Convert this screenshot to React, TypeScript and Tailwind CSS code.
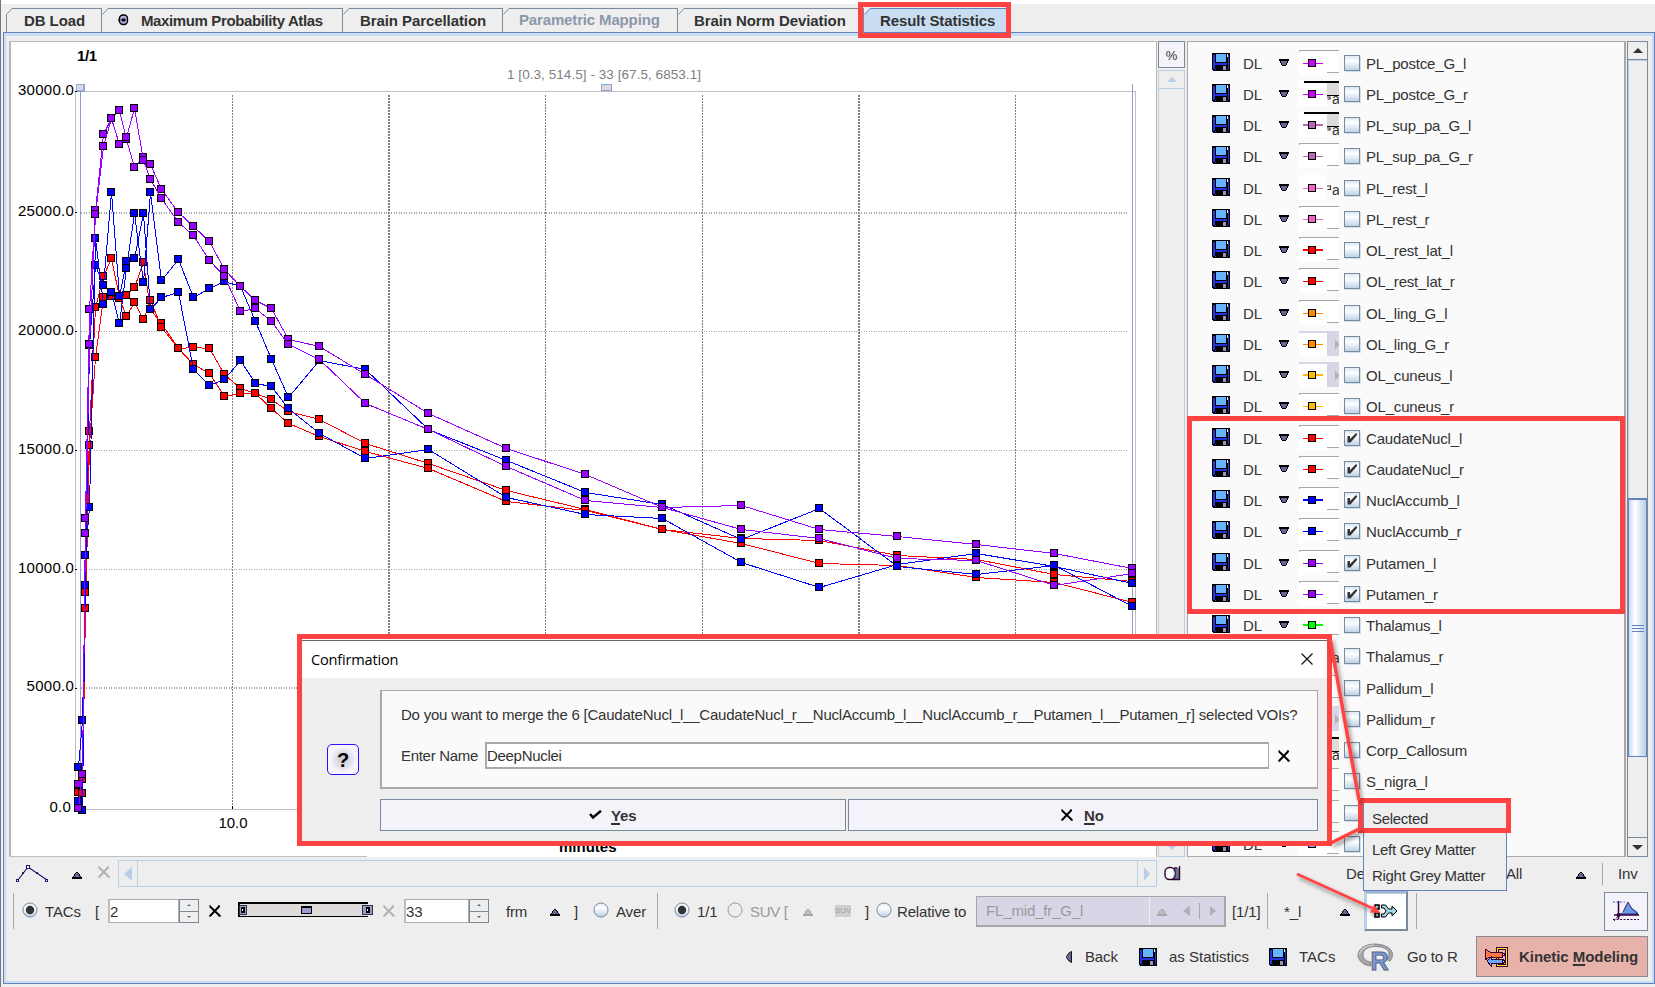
import React from 'react';

const FONT = "font-['Liberation_Sans',Arial,sans-serif]";

/* ---------- chart data (canvas units) ---------- */

const FRAME_X = [
  78, 82, 85, 89, 95, 103, 111, 119, 126, 134, 143, 150, 161, 178, 193, 209, 224, 240, 255, 271, 288, 319, 365, 428,
  506, 585, 662, 741, 819, 897, 976, 1054, 1132,
];

type Series = { color: string; y: number[] };

const SERIES: Series[] = [
  {
    color: '#ff0000',
    y: [
      792, 779, 592, 431, 307, 276, 258, 297, 295, 287, 262, 309, 323, 348, 347, 348, 374, 388, 393, 399, 411, 419, 443,
      463, 490, 509, 529, 538, 540, 555, 559, 574, 581,
    ],
  },
  {
    color: '#ff0000',
    y: [
      784, 793, 608, 445, 357, 297, 296, 298, 316, 302, 319, 300, 327, 348, 364, 373, 396, 393, 393, 408, 423, 436, 451,
      468, 501, 510, 529, 543, 563, 565, 577, 582, 602,
    ],
  },
  {
    color: '#0000ff',
    y: [
      767, 720, 585, 345, 265, 285, 192, 296, 261, 258, 213, 309, 297, 292, 369, 385, 379, 360, 383, 386, 408, 433, 458,
      449, 497, 514, 518, 562, 587, 564, 553, 566, 583,
    ],
  },
  {
    color: '#0000ff',
    y: [
      801, 810, 555, 507, 238, 304, 292, 323, 268, 213, 282, 192, 280, 259, 297, 288, 281, 286, 321, 359, 397, 360, 369,
      429, 460, 492, 504, 539, 508, 566, 574, 565, 606,
    ],
  },
  {
    color: '#9900ff',
    y: [
      784, 774, 518, 309, 210, 134, 118, 110, 139, 167, 157, 164, 189, 212, 226, 241, 269, 286, 300, 308, 339, 346, 374,
      413, 448, 474, 507, 505, 529, 536, 544, 553, 568,
    ],
  },
  {
    color: '#9900ff',
    y: [
      808, 774, 533, 344, 214, 146, 118, 144, 137, 108, 160, 179, 198, 222, 235, 260, 276, 311, 308, 321, 344, 359, 403,
      429, 466, 500, 507, 529, 538, 558, 560, 585, 573,
    ],
  },
];

function Chart() {
  const yTicks: [number, string, number][] = [
    [91, '30000.0', 95],
    [212, '25000.0', 216],
    [331, '20000.0', 335],
    [450, '15000.0', 454],
    [569, '10000.0', 573],
    [688, '5000.0', 691],
    [809, '0.0', 812],
  ];
  return (
    <svg width="1148" height="816" viewBox="9 41 1148 816" className="block shrink-0 bg-white">
      <g shapeRendering="crispEdges">
        <rect x="9" y="41" width="2" height="816" fill="#b8b8b8" />
        <rect x="9" y="41" width="1148" height="1" fill="#b8b8b8" />
        <rect x="1156" y="41" width="1" height="816" fill="#b8b8b8" />
        <rect x="9" y="857" width="1148" height="1" fill="#b8b8b8" />
        <rect x="9" y="856" width="358" height="1" fill="#c0c0c0" />
        {[232, 545, 702, 1015].map((x) => (
          <line key={x} x1={x + 0.5} x2={x + 0.5} y1="95" y2="809" stroke="#808080" strokeDasharray="2 1" />
        ))}
        {[388, 858].map((x) => (
          <line key={x} x1={x + 1} x2={x + 1} y1="95" y2="809" stroke="#808080" strokeWidth="2" strokeDasharray="2 1" />
        ))}
        {[331, 450, 569].map((y) => (
          <line key={y} x1="81" x2="1128" y1={y + 0.5} y2={y + 0.5} stroke="#a8a8a8" strokeDasharray="1 1.5" />
        ))}
        {[212, 687].map((y) => (
          <line key={y} x1="81" x2="1128" y1={y + 1} y2={y + 1} stroke="#a8a8a8" strokeWidth="2" strokeDasharray="1 1.5" />
        ))}
        <rect x="75.5" y="91.5" width="1060" height="718" fill="none" stroke="#c0c0c0" />
        {yTicks.slice(0, 6).map(([y]) => (
          <rect key={y} x="75" y={y} width="2" height="1" fill="#000" />
        ))}
        <rect x="232" y="806" width="1" height="3" fill="#000" />
        <rect x="80" y="91" width="1" height="718" fill="#9c9ad0" />
        <rect x="1132" y="84" width="1" height="725" fill="#9c9ad0" />
        <rect x="76.5" y="84.5" width="7" height="6" fill="#dedada" stroke="#8fb0e4" />
        <path d="M84.500 84v7h-8" fill="none" stroke="#9c9ad0" />
        <rect x="601.500" y="84.500" width="10" height="6" fill="#dedada" stroke="#7fa8e8" />
        <path d="M611.500 84v6.500h-10" fill="none" stroke="#9c9ad0" />
        {SERIES.map((s, i) => (
          <g key={i}>
            <polyline
              points={s.y.map((y, k) => `${FRAME_X[k] + 0.5},${y + 0.5}`).join(' ')}
              fill="none"
              stroke={s.color}
              strokeWidth="1"
            />
            {s.y.map((y, k) => (
              <rect key={k} x={FRAME_X[k] - 3.5} y={y - 3.5} width="7" height="7" fill={s.color} stroke="#000" />
            ))}
          </g>
        ))}
      </g>
      <g fontSize="15" fill="#000" fontFamily="Liberation Sans, Arial, sans-serif" letterSpacing="0">
        {yTicks.map(([y, label, base], i) => (
          <text key={y} x={i === 6 ? 71 : 74} y={base} textAnchor="end" letterSpacing="0.25">
            {label}
          </text>
        ))}
        <text x="233" y="828" textAnchor="middle">
          10.0
        </text>
        <text x="77" y="61" fontWeight="bold" textLength="20">
          1/1
        </text>
        <text x="507" y="79" fontSize="13.500" fill="#808080" textLength="194">
          1 [0.3, 514.5] - 33 [67.5, 6853.1]
        </text>
        <text x="559" y="852" fontWeight="bold">
          minutes
        </text>
      </g>
    </svg>
  );
}

/* ---------- icons ---------- */

function Floppy() {
  return (
    <svg width="18" height="18" viewBox="0 0 18 18" shapeRendering="crispEdges" className="block shrink-0">
      <path d="M0 0h18v18H1v-1H0z" fill="#000" />
      <path d="M1 2h2v14h1v-4h11v4h1V2h1v14h-1v1H3v-1H1z" fill="#2233dd" />
      <rect x="3" y="10" width="12" height="2" fill="#2233dd" />
      <rect x="4" y="12" width="11" height="6" fill="#000" />
      <rect x="4" y="1" width="10" height="8" fill="#66b3ff" />
      <rect x="11" y="13" width="3" height="4" fill="#9a96a8" />
      <rect x="15" y="1" width="1" height="3" fill="#fff" />
    </svg>
  );
}

function DownMark() {
  return (
    <svg width="10" height="7" viewBox="0 0 10 7" shapeRendering="crispEdges" className="block">
      <path d="M0 0h10v2H9v2H8v2H7v1H3V6H2V4H1V2H0z" fill="#000" />
      <path d="M2 2h6v2H7v2H3V4H2z" fill="#666699" />
    </svg>
  );
}

function UpMark({ dim = false }: { dim?: boolean }) {
  return (
    <svg width="10" height="7" viewBox="0 0 10 7" shapeRendering="crispEdges" className="block">
      <path d="M4 0h2v1h1v1h1v2h1v1h1v2H0V5h1V4h1V2h1V1h1z" fill={dim ? '#a6a6a6' : '#000'} />
      <path d="M4 1h2v1h1v2h1v1H2V4h1V2h1z" fill={dim ? '#bdbdbd' : '#666699'} />
    </svg>
  );
}

function Cross({ dim = false }: { dim?: boolean }) {
  return (
    <svg width="12" height="12" viewBox="0 0 12 12" className="block">
      <path d="M1 1.500L11 11M10.500 1L1 11" stroke={dim ? '#b0b0b0' : '#000'} strokeWidth="1.900" fill="none" />
      <path d="M0 1h2M9 1h2M9.500 11H12M0 11h2" stroke={dim ? '#b0b0b0' : '#000'} strokeWidth="1" />
    </svg>
  );
}

function Radio({ on = false, off = false }: { on?: boolean; off?: boolean }) {
  return (
    <svg width="16" height="16" viewBox="0 0 16 16" className="block">
      <defs>
        <linearGradient id="radioFill" x1="0" y1="0" x2="0" y2="1">
          <stop offset="0" stopColor="#dfe9f4" />
          <stop offset=".35" stopColor="#fff" />
          <stop offset="1" stopColor="#b8cfe5" />
        </linearGradient>
      </defs>
      <circle cx="8" cy="8" r="7" fill={off ? '#eee' : 'url(#radioFill)'} stroke={off ? '#999' : '#7a8a99'} />
      {on && <circle cx="8" cy="8" r="4.200" fill="#333" />}
    </svg>
  );
}

function Sep() {
  return <div className="h-9 w-px shrink-0 bg-[#a8a8a8]" />;
}

/* ---------- tabs ---------- */

function Tab({ children, width, kind = 'normal', first = false }: {
  children: React.ReactNode;
  width: string;
  kind?: 'normal' | 'disabled' | 'active';
  first?: boolean;
}) {
  const line = kind === 'active' ? '#6382bf' : '#7a8a99';
  return (
    <div className={`flex h-6 shrink-0 ${width} ${kind === 'active' ? 'bg-[#c8ddf2]' : ''}`}>
      <svg width="6" height="24" viewBox="0 0 6 24" className="block shrink-0">
        {kind === 'active' && <path d="M0 0h6L0 7z" fill="#eee" />}
        <path d={first ? 'M.5 24V6.500L6 .5' : 'M.5 6.500L6 .5'} stroke={line} fill="none" />
      </svg>
      <div
        className={`flex h-6 flex-1 items-center whitespace-nowrap border-r border-t pl-[10px] text-[15px] font-bold leading-none tracking-[-0.080px] ${
          kind === 'active'
            ? 'border-[#6382bf] pb-px text-[#333]'
            : kind === 'disabled'
              ? 'border-[#7a8a99] pb-[3px] text-[#8b98ab]'
              : 'border-[#7a8a99] pb-px text-[#333]'
        }`}
      >
        {children}
      </div>
    </div>
  );
}

/* ---------- VOI list ---------- */

type Strip = 'plain' | 'dark' | 'text' | 'lav';
type Voi = { name: string; color: string; strip: Strip; thick?: boolean; checked?: boolean };

const VOIS: Voi[] = [
  { name: 'PL_postce_G_l', color: '#cc00ff', strip: 'plain' },
  { name: 'PL_postce_G_r', color: '#cc00ff', strip: 'dark' },
  { name: 'PL_sup_pa_G_l', color: '#b868b8', strip: 'dark', thick: true },
  { name: 'PL_sup_pa_G_r', color: '#b868b8', strip: 'plain' },
  { name: 'PL_rest_l', color: '#ee66bb', strip: 'text' },
  { name: 'PL_rest_r', color: '#ee66bb', strip: 'plain' },
  { name: 'OL_rest_lat_l', color: '#ff0000', strip: 'plain', thick: true },
  { name: 'OL_rest_lat_r', color: '#ff0000', strip: 'plain' },
  { name: 'OL_ling_G_l', color: '#ff8800', strip: 'plain' },
  { name: 'OL_ling_G_r', color: '#ff8800', strip: 'lav' },
  { name: 'OL_cuneus_l', color: '#ffbb00', strip: 'lav', thick: true },
  { name: 'OL_cuneus_r', color: '#ffbb00', strip: 'plain' },
  { name: 'CaudateNucl_l', color: '#ff0000', strip: 'plain', checked: true },
  { name: 'CaudateNucl_r', color: '#ff0000', strip: 'plain', checked: true },
  { name: 'NuclAccumb_l', color: '#0000ff', strip: 'plain', thick: true, checked: true },
  { name: 'NuclAccumb_r', color: '#0000ff', strip: 'plain', checked: true },
  { name: 'Putamen_l', color: '#9900ff', strip: 'plain', checked: true },
  { name: 'Putamen_r', color: '#9900ff', strip: 'plain', checked: true },
  { name: 'Thalamus_l', color: '#00ff00', strip: 'plain', thick: true },
  { name: 'Thalamus_r', color: '#00ff00', strip: 'text' },
  { name: 'Pallidum_l', color: '#00ccff', strip: 'plain' },
  { name: 'Pallidum_r', color: '#00ccff', strip: 'lav' },
  { name: 'Corp_Callosum', color: '#ff8800', strip: 'dark' },
  { name: 'S_nigra_l', color: '#88aaff', strip: 'plain' },
  { name: '', color: '#88aaff', strip: 'plain' },
  { name: '', color: '#88aaff', strip: 'plain' },
];

function Marker({ voi }: { voi: Voi }) {
  const { strip, color, thick } = voi;
  return (
    <svg width="40" height="25" viewBox="0 0 40 25" shapeRendering="crispEdges" className="block shrink-0">
      <rect width="28" height="25" fill="#fff" />
      {strip === 'plain' && (
        <>
          <rect x="28" width="12" height="22" fill="#fff" />
          <rect width="40" height="1" fill="#a8a8a8" />
          <rect width="1" height="2" fill="#a8a8a8" />
          <rect x="28" y="22" width="12" height="1" fill="#a8a8a8" />
        </>
      )}
      {strip === 'dark' && (
        <>
          <rect x="28" width="12" height="14" fill="#dfdbda" />
          <rect x="5" width="35" height="2" fill="#000" />
          <rect x="28" y="14" width="12" height="1" fill="#000" />
        </>
      )}
      {strip === 'lav' && (
        <>
          <rect width="40" height="2" fill="#d6d6e6" />
          <rect x="28" width="12" height="25" fill="#d6d6e6" />
          <path d="M36 9v9l4-4v-1z" fill="#b4b4b4" />
        </>
      )}
      {(strip === 'dark' || strip === 'text') && (
        <g shapeRendering="auto">
          <path d={strip === 'dark' ? 'M28 16h3v2h-2.500' : 'M28 11h3.500v3.500h-3'} stroke="#333" strokeWidth="1.200" fill="none" />
          <text x="33" y={strip === 'dark' ? 23 : 20} fontSize="14" fill="#333">
            a
          </text>
        </g>
      )}
      <rect x="4" y={thick ? 12 : 13} width="20" height={thick ? 2 : 1} fill={color} />
      <rect x="9.500" y="9.500" width="7" height="7" fill={color} stroke="#000" />
    </svg>
  );
}

function CheckBox({ checked = false }: { checked?: boolean }) {
  return (
    <div className="flex size-4 shrink-0 items-center justify-center border border-[#7a8a99] bg-linear-to-b from-[#dde8f3] via-white via-35% to-[#bed2e8] shadow-[1px_1px_0_#d0dfee]">
      {checked && (
        <svg width="10" height="10" viewBox="0 0 10 10" className="block">
          <path d="M.5 3H3v3L8.500 .5H10V2L3.500 9.500h-3z" fill="#333" />
        </svg>
      )}
    </div>
  );
}

function VoiRow({ voi, extra }: { voi: Voi; extra: boolean }) {
  return (
    <div className={`flex h-[31px] shrink-0 pl-6 text-[15px] leading-none tracking-[-0.180px] text-[#333] ${extra ? 'mt-px' : ''}`}>
      <div className="pt-[5px]">
        <Floppy />
      </div>
      <div className="w-[49px] pl-[13px] pt-2 tracking-normal">DL</div>
      <div className="w-5 pt-[11px]">
        <DownMark />
      </div>
      <div className="w-[45px] pt-[2px]">
        <Marker voi={voi} />
      </div>
      <div className="pt-[7px]">
        <CheckBox checked={voi.checked} />
      </div>
      <div className="pl-[6px] pt-2">{voi.name}</div>
    </div>
  );
}

/* ---------- controls ---------- */

function Spinner({ value, width }: { value: string; width: string }) {
  return (
    <div className={`flex h-6 shrink-0 ${width}`}>
      <div className="flex flex-1 items-center border border-l-2 border-[#b0acac] border-l-[#c0bcbc] bg-white text-[15px] leading-none">
        {value}
      </div>
      <div className="flex w-5 flex-col border border-[#7a8a99]">
        <div className="flex flex-1 items-center justify-center border-b border-[#7a8a99]">
          <svg width="4" height="2" viewBox="0 0 4 2">
            <path d="M0 2L2 0L4 2z" fill="#5a6a79" />
          </svg>
        </div>
        <div className="flex flex-1 items-center justify-center">
          <svg width="4" height="2" viewBox="0 0 4 2">
            <path d="M0 0L2 2L4 0z" fill="#5a6a79" />
          </svg>
        </div>
      </div>
    </div>
  );
}

function FrameSlider() {
  return (
    <svg width="135" height="16" viewBox="0 0 135 16" shapeRendering="crispEdges" className="block shrink-0">
      <rect x="1" y="1" width="129" height="14" fill="#dfdbda" />
      <path d="M0 0h130v2H2v12h128v1H0z" fill="#000" />
      <rect x="1.500" y="3.500" width="7" height="9" fill="#9c9ad0" stroke="#333" />
      <rect x="3" y="5" width="4" height="6" fill="#000" />
      <rect x="4" y="7" width="1" height="2" fill="#fff" />
      <rect x="63.500" y="4.500" width="10" height="7" fill="#9c9ad0" stroke="#000" />
      <rect x="63" y="4" width="11" height="2" fill="#000" />
      <rect x="124.500" y="3.500" width="10" height="9" fill="#9c9ad0" stroke="#333" />
      <rect x="128" y="5" width="4" height="6" fill="#000" />
      <rect x="129" y="7" width="1" height="2" fill="#fff" />
    </svg>
  );
}

function ToolbarTop() {
  return (
    <div className="flex h-8 items-center pl-[3px] pt-px">
      <svg width="33" height="18" viewBox="0 0 33 18" className="ml-[7px] block shrink-0">
        <path d="M2 15L12 2L31 15" stroke="#1a1a70" fill="none" strokeWidth="1.200" />
        <g fill="#fff" stroke="#1a1a70">
          <rect x=".5" y="14.500" width="2" height="2" />
          <rect x="10.500" y=".5" width="3" height="3" />
          <rect x="29.500" y="14.500" width="2" height="2" />
        </g>
        <rect x="6" y="7" width="2" height="2" fill="#1a1a70" />
        <rect x="20" y="7" width="2" height="2" fill="#1a1a70" />
      </svg>
      <div className="flex w-[49px] justify-center pl-[6px] pt-[3px]">
        <UpMark />
      </div>
      <div className="mr-2 w-3 pb-1">
        <Cross dim />
      </div>
      <div className="flex h-[27px] w-[1039px] shrink-0 border border-[#b8cfe5]">
        <div className="flex w-[19px] items-center justify-center border-r border-[#b8cfe5]">
          <svg width="8" height="14" viewBox="0 0 8 14">
            <path d="M8 0v14L0 7z" fill="#b8cfe5" />
          </svg>
        </div>
        <div className="flex-1" />
        <div className="flex w-[19px] items-center justify-center border-l border-[#b8cfe5]">
          <svg width="6" height="14" viewBox="0 0 6 14">
            <path d="M0 0v14L6 7z" fill="#b8cfe5" />
          </svg>
        </div>
      </div>
      <svg width="17" height="17" viewBox="0 0 17 17" className="ml-[7px] block shrink-0">
        <rect x="8" y="4" width="6" height="10" fill="#2f8ba0" />
        <rect x="12" y="3" width="3" height="11" fill="#6b7a80" />
        <path d="M15.500 1v14M10 3h3M8 14.500h8" stroke="#330033" strokeWidth="1.400" fill="none" />
        <rect x="1" y="2.500" width="10" height="12" rx="4.500" fill="#fff" stroke="#330033" strokeWidth="1.400" />
        <path d="M9 5c1.500 2 1.500 5 0 7" stroke="#a8c4ff" strokeWidth="1.200" fill="none" />
      </svg>
      <div className="ml-[165px] w-5 shrink-0 overflow-hidden">De</div>
      <div className="flex-1" />
      <div className="w-[70px] shrink-0">All</div>
      <div className="w-[26px] shrink-0 pt-[3px]">
        <UpMark />
      </div>
      <div className="h-[22px] w-px bg-[#a8a8a8]" />
      <div className="w-[49px] shrink-0 pl-[15px]">Inv</div>
    </div>
  );
}

function ToolbarMid() {
  return (
    <div className="flex h-[43px] items-center whitespace-nowrap pl-[6px] pt-px">
      <div className="w-[10px] shrink-0 pl-px">
        <Sep />
      </div>
      <div className="w-[23px] shrink-0 pb-[3px]">
        <Radio on />
      </div>
      <div className="w-[50px] shrink-0">TACs</div>
      <div className="w-[13px] shrink-0">[</div>
      <Spinner value="2" width="w-[91px]" />
      <div className="w-[39px] shrink-0 pl-[10px]">
        <Cross />
      </div>
      <div className="pb-0.5">
        <FrameSlider />
      </div>
      <div className="w-[31px] shrink-0 pl-[10px]">
        <Cross dim />
      </div>
      <Spinner value="33" width="w-[85px]" />
      <div className="w-[61px] shrink-0 pl-[17px]">frm</div>
      <div className="w-[23px] shrink-0 pt-[3px]">
        <UpMark />
      </div>
      <div className="w-5 shrink-0 pl-px">]</div>
      <div className="w-[23px] shrink-0 pb-[3px]">
        <Radio />
      </div>
      <div className="w-[41px] shrink-0">Aver</div>
      <div className="w-[17px] shrink-0">
        <Sep />
      </div>
      <div className="w-[23px] shrink-0 pb-[3px]">
        <Radio on />
      </div>
      <div className="w-[30px] shrink-0">1/1</div>
      <div className="w-[23px] shrink-0 pb-[3px]">
        <Radio off />
      </div>
      <div className="w-[53px] shrink-0 tracking-[-0.300px] text-[#999]">SUV [</div>
      <div className="w-[32px] shrink-0 pt-[3px]">
        <UpMark dim />
      </div>
      <div className="w-[30px] shrink-0">
        <div className="flex h-3 w-4 items-center justify-center bg-[#cfcfcf] text-[8px] leading-none text-[#a0a0a0]">SUV</div>
      </div>
      <div className="w-[11px] shrink-0">]</div>
      <div className="w-[21px] shrink-0 pb-[3px]">
        <Radio />
      </div>
      <div className="w-[79px] shrink-0">Relative to</div>
      <div className="flex h-[31px] w-[250px] shrink-0 items-center border border-b-2 border-r-2 border-[#a8a4a8] bg-[#d6d6e6] text-[#999]">
        <div className="w-[172px] pl-[9px]">FL_mid_fr_G_l</div>
        <div className="h-full w-px bg-[#ececf4]" />
        <div className="pl-[7px] pt-[3px]">
          <UpMark dim />
        </div>
        <svg width="35" height="18" viewBox="0 0 35 18" className="ml-4 block">
          <path d="M7 4v10l-2-1-5-4 5-4zM27 4v10l6-5z" fill="#b0b0b4" />
          <path d="M16.500 1v16" stroke="#a8a8b0" />
        </svg>
      </div>
      <div className="w-[41px] shrink-0 pl-[6px]">[1/1]</div>
      <div className="w-[17px] shrink-0">
        <Sep />
      </div>
      <div className="w-[56px] shrink-0">*_l</div>
      <div className="w-[24px] shrink-0 pt-[3px]">
        <UpMark />
      </div>
      <div className="flex h-10 w-11 shrink-0 items-center justify-center border-2 border-[#7a8a99] border-l-[#b8cfe5] border-t-[#9fb6d0] bg-white shadow-[inset_1px_1px_0_#b8cfe5]">
        <svg width="24" height="14" viewBox="0 0 24 14" className="block">
          <path d="M1 1h4v4H1zM1 9h4v4H1z" fill="#9fd8e8" stroke="#000" strokeWidth="1.600" />
          <path
            d="M7.500 1h4l3 4H18V2l5 5-5 5V9h-3.500l-3 4h-4v-3H10l2-3-2-3H7.500z"
            fill="#9fd8e8"
            stroke="#000"
            strokeWidth="1"
          />
        </svg>
      </div>
      <div className="w-[9px] shrink-0 pl-2">
        <Sep />
      </div>
      <div className="flex-1" />
      <div className="mr-1 flex h-[39px] w-11 shrink-0 items-center justify-center border border-[#7a8a99] bg-[#f5f3fa]">
        <svg width="28" height="22" viewBox="0 0 28 22" className="block">
          <path d="M7 14l4-2 2-5 3-5 4 6 6 4v3H7z" fill="#6a9be8" />
          <path d="M11 12l5-10 4 7 6 5H7" fill="none" stroke="#330044" strokeWidth=".8" />
          <path d="M1 2h12" stroke="#6a9be8" strokeWidth="1.500" strokeDasharray="2 1.500" />
          <path d="M6.500 1v18M2 15h25" stroke="#330044" strokeWidth="1.500" />
          <path d="M1 19.500h26M2 21l5-6" stroke="#330044" strokeDasharray="2 1.500" />
          <circle cx="6.500" cy="15" r="2" fill="#330044" />
        </svg>
      </div>
    </div>
  );
}

function RLogo() {
  return (
    <svg width="36" height="28" viewBox="0 0 36 28" className="block shrink-0 overflow-visible">
      <path
        d="M17.500 1C8 1 1 6 1 12s6 10.500 13 11v-4c-5-.6-8-3.500-8-7.500 0-5 5.500-8 12.500-8S32 6 32 11c0 2-.7 3.600-2 5l2.500 2.500c2-2 3-4.300 3-7C35.500 5 27 1 17.500 1z"
        fill="#a4a6a9"
        stroke="#77797c"
        strokeWidth=".8"
      />
      <path d="M17 2.200C9 2.200 2.500 6.500 2.500 12" fill="none" stroke="#cdced0" strokeWidth="1.200" />
      <text x="13.500" y="26.500" fontSize="25" fontWeight="bold" fill="#8098d0" stroke="#56658c" strokeWidth="1" letterSpacing="0">
        R
      </text>
    </svg>
  );
}

function ToolbarBottom() {
  return (
    <div className="flex h-[49px] items-center whitespace-nowrap pl-[1060px]">
      <svg width="6" height="12" viewBox="0 0 6 12" className="block shrink-0">
        <path d="M5.500 .5v11L3 10 .5 6.500v-1L3 2z" fill="#666699" stroke="#111" />
      </svg>
      <div className="w-[67px] shrink-0 pl-[13px]">Back</div>
      <Floppy />
      <div className="w-[112px] shrink-0 pl-3 tracking-normal">as Statistics</div>
      <Floppy />
      <div className="w-[70px] shrink-0 pl-3 tracking-normal">TACs</div>
      <RLogo />
      <div className="w-[83px] shrink-0 pl-[14px]">Go to R</div>
      <div className="flex h-[41px] w-[172px] shrink-0 items-center border border-[#8a8a99] bg-[#e6b2aa] pl-[7px] font-bold">
        <svg width="24" height="20" viewBox="0 0 24 20" shapeRendering="crispEdges" className="block shrink-0">
          <rect x="13.500" y="1.500" width="9" height="17" fill="#e6b2aa" stroke="#330033" strokeWidth="3" />
          <rect x="13.500" y="1.500" width="9" height="17" fill="none" stroke="#ffee00" />
          <path d="M1 2l5 3h12v5H6l-5 3z" fill="#ff7744" stroke="#330033" />
          <path d="M3 14l4-4v2h12v4H7v3z" fill="#6fa8ff" stroke="#330033" />
          <rect x="18" y="6" width="2" height="2" fill="#fff" stroke="#330033" />
          <rect x="18" y="13" width="2" height="2" fill="#fff" stroke="#330033" />
        </svg>
        <div className="pl-[11px] tracking-[-0.050px]">
          Kinetic <span className="underline decoration-2 underline-offset-2">M</span>odeling
        </div>
      </div>
    </div>
  );
}

/* ---------- overlays ---------- */

function Dialog() {
  return (
    <div className="absolute left-[296px] top-[634px] flex h-[212px] w-[1035px] flex-col border-[5px] border-[#ff4242] bg-[#eee]">
      <div className="flex h-[39px] shrink-0 items-center justify-between border-t border-white bg-white pl-[9px] pr-[14px] shadow-[inset_0_1px_0_#666]">
        <span className="font-['Open_Sans',sans-serif] text-[14.600px] tracking-[-0.200px] text-black">Confirmation</span>
        <svg width="12" height="12" viewBox="0 0 12 12">
          <path d="M.5 .5l11 11M11.500 .5l-11 11" stroke="#111" strokeWidth="1.200" />
        </svg>
      </div>
      <div className="flex flex-1">
        <div className="w-[78px] shrink-0 pl-[25px] pt-[66px]">
          <div className="flex h-[31px] w-8 items-center justify-center rounded-[5px] border border-[#2a10ff] bg-radial from-[#c8c8cc] to-[#faf4ff] to-65% text-[20px] font-bold leading-none text-black">
            ?
          </div>
        </div>
        <div className="flex w-[938px] shrink-0 flex-col pt-3">
          <div className="flex h-[99px] flex-col border-2 border-t border-r border-[#aca8a8] bg-[#fafafa] pl-[19px]">
            <div className="pt-[15px] text-[15px] leading-[17px]">
              <span className="inline-block whitespace-nowrap tracking-[-0.218px]">
                Do you want to merge the 6 [CaudateNucl_l__CaudateNucl_r__NuclAccumb_l__NuclAccumb_r__Putamen_l__Putamen_r] selected VOIs?
              </span>
            </div>
            <div className="mt-[19px] flex items-center">
              <div className="w-[84px] tracking-[-0.300px]">Enter Name</div>
              <div className="flex h-[27px] w-[784px] items-center border-2 border-r border-[#aca8a8] bg-white tracking-[-0.300px]">DeepNuclei</div>
              <div className="pl-[9px]">
                <Cross />
              </div>
            </div>
          </div>
          <div className="mt-[10px] flex h-8 gap-0.5 font-bold">
            <div className="flex flex-1 items-center border border-[#7a8a99] bg-[#f5f3fa] pl-[208px]">
              <svg width="13" height="10" viewBox="0 0 13 10">
                <path d="M1 4l3 3.500L12 .8" stroke="#000" strokeWidth="2.400" fill="none" />
              </svg>
              <span className="pl-[9px]">
                <span className="underline decoration-2 underline-offset-2">Y</span>es
              </span>
            </div>
            <div className="flex flex-1 items-center border border-[#7a8a99] bg-[#f5f3fa] pl-[212px]">
              <Cross />
              <span className="pl-[11px]">
                <span className="underline decoration-2 underline-offset-2">N</span>o
              </span>
            </div>
          </div>
        </div>
      </div>
    </div>
  );
}

function MergeMenu() {
  return (
    <div className="absolute left-[1362px] top-[800px] flex h-[91px] w-[144px] flex-col border border-[#6382bf] bg-[#eee] pl-2 tracking-[-0.300px]">
      <div className="mt-[10px] h-[31px]">Selected</div>
      <div className="h-[26px]">Left Grey Matter</div>
      <div>Right Grey Matter</div>
    </div>
  );
}

function Callouts() {
  return (
    <svg width="130" height="300" viewBox="1290 630 130 300" className="absolute left-[1289px] top-[630px]">
      <defs>
        <filter id="soft" x="-20%" y="-20%" width="150%" height="150%">
          <feDropShadow dx="2" dy="3" stdDeviation="2" floodOpacity=".45" />
        </filter>
      </defs>
      <g stroke="#ff4242" strokeWidth="3.500" fill="none" filter="url(#soft)">
        <path d="M1330 638L1359 800" />
        <path d="M1331 843L1361 828" />
        <path d="M1297 874L1372 908" strokeWidth="2.500" />
        <path d="M1380 913L1370 912.500L1374 904.500z" fill="#ff4242" stroke="none" />
      </g>
    </svg>
  );
}

export default function App() {
  return (
    <div className={`relative flex h-[987px] w-[1655px] flex-col overflow-hidden border-l border-[#777] bg-[#eee] text-[15px] leading-none tracking-[-0.150px] text-[#333] ${FONT}`}>
      <div className="h-1 shrink-0 bg-white" />
      <div className="flex h-7 shrink-0 pl-[5px] pt-1">
        <Tab width="w-[96px]" first>
          <span className="pl-[2px]">DB Load</span>
        </Tab>
        <Tab width="w-[241px]">
          <svg width="12" height="12" viewBox="0 0 12 12" className="mr-[11px] block">
            <rect x="1.500" y="1" width="8" height="9.500" rx="3.500" fill="#b0b0dc" stroke="#000" strokeWidth="1.400" />
            <path d="M0 7.500V4.500M4 5h3v2H4z" stroke="#000" fill="#000" />
          </svg>
          <span className="tracking-[-0.380px]">Maximum Probability Atlas</span>
        </Tab>
        <Tab width="w-[160px]">
          <span className="pl-px">Brain Parcellation</span>
        </Tab>
        <Tab width="w-[175px]" kind="disabled">
          <span className="tracking-[-0.150px]">Parametric Mapping</span>
        </Tab>
        <Tab width="w-[186px]">Brain Norm Deviation</Tab>
        <Tab width="w-[147px]" kind="active">
          Result Statistics
        </Tab>
      </div>

      <div className="ml-[2px] h-[952px] w-[1652px] shrink-0 border border-[#6382bf]">
        <div className="h-full border-2 border-t-[3px] border-[#c8ddf2] pt-[5px]">
          <div className="flex h-[816px] pl-[3px]">
            <Chart />
            <div className="ml-px flex w-[27px] shrink-0 flex-col">
              <div className="flex h-[27px] items-center justify-center border border-[#7a8a99] bg-[#f5f3fa] pt-0.5 text-[13px]">%</div>
              <div className="mt-0.5 flex flex-1 flex-col border border-[#b8cfe5]">
                <div className="flex h-[18px] items-center justify-center border-b border-[#b8cfe5]">
                  <svg width="10" height="5" viewBox="0 0 10 5">
                    <path d="M0 5L5 0L10 5z" fill="#b8cfe5" />
                  </svg>
                </div>
                <div className="flex-1" />
                <div className="flex h-[18px] items-center justify-center border-t border-[#b8cfe5]">
                  <svg width="10" height="5" viewBox="0 0 10 5">
                    <path d="M0 0L5 5L10 0z" fill="#b8cfe5" />
                  </svg>
                </div>
              </div>
            </div>
            <div className="ml-0.5 flex w-[439px] shrink-0 flex-col overflow-hidden border border-r-2 border-[#aca8a8] bg-[#fafafa] pt-[6px]">
              {VOIS.map((v, i) => (
                <VoiRow key={i} voi={v} extra={i > 0 && i % 4 === 0} />
              ))}
            </div>
            <div className="ml-px flex w-[21px] shrink-0 flex-col border border-[#7a8a99]">
              <div className="flex h-[18px] shrink-0 items-center justify-center border-b border-[#7a8a99]">
                <svg width="10" height="5" viewBox="0 0 10 5">
                  <path d="M0 5L5 0L10 5z" fill="#333" />
                </svg>
              </div>
              <div className="h-[438px] shrink-0 border-l border-t border-[#b8cfe5]" />
              <div className="flex h-[259px] shrink-0 flex-col items-center justify-center gap-[2px] border border-t-2 border-[#6382bf] bg-linear-to-r from-[#c8ddf2] via-white via-35% to-[#b8cfe5]">
                <div className="h-px w-3 bg-[#6382bf]" />
                <div className="h-px w-3 bg-[#6382bf]" />
                <div className="h-px w-3 bg-[#6382bf]" />
              </div>
              <div className="flex-1" />
              <div className="flex h-[19px] shrink-0 items-center justify-center border-t border-[#7a8a99]">
                <svg width="11" height="5" viewBox="0 0 11 5">
                  <path d="M0 0L5.500 5L11 0z" fill="#333" />
                </svg>
              </div>
            </div>
          </div>
          <ToolbarTop />
          <ToolbarMid />
          <ToolbarBottom />
        </div>
      </div>

      <div className="absolute left-[857px] top-[2px] h-9 w-[153px] border-[5px] border-[#ff4242]" />
      <div className="absolute left-[1186px] top-[416px] h-[198px] w-[438px] border-[5px] border-[#ff4242]" />
      <Dialog />
      <MergeMenu />
      <div className="absolute left-[1357px] top-[798px] h-[35px] w-[153px] border-[5px] border-[#ff4242]" />
      <Callouts />
    </div>
  );
}
